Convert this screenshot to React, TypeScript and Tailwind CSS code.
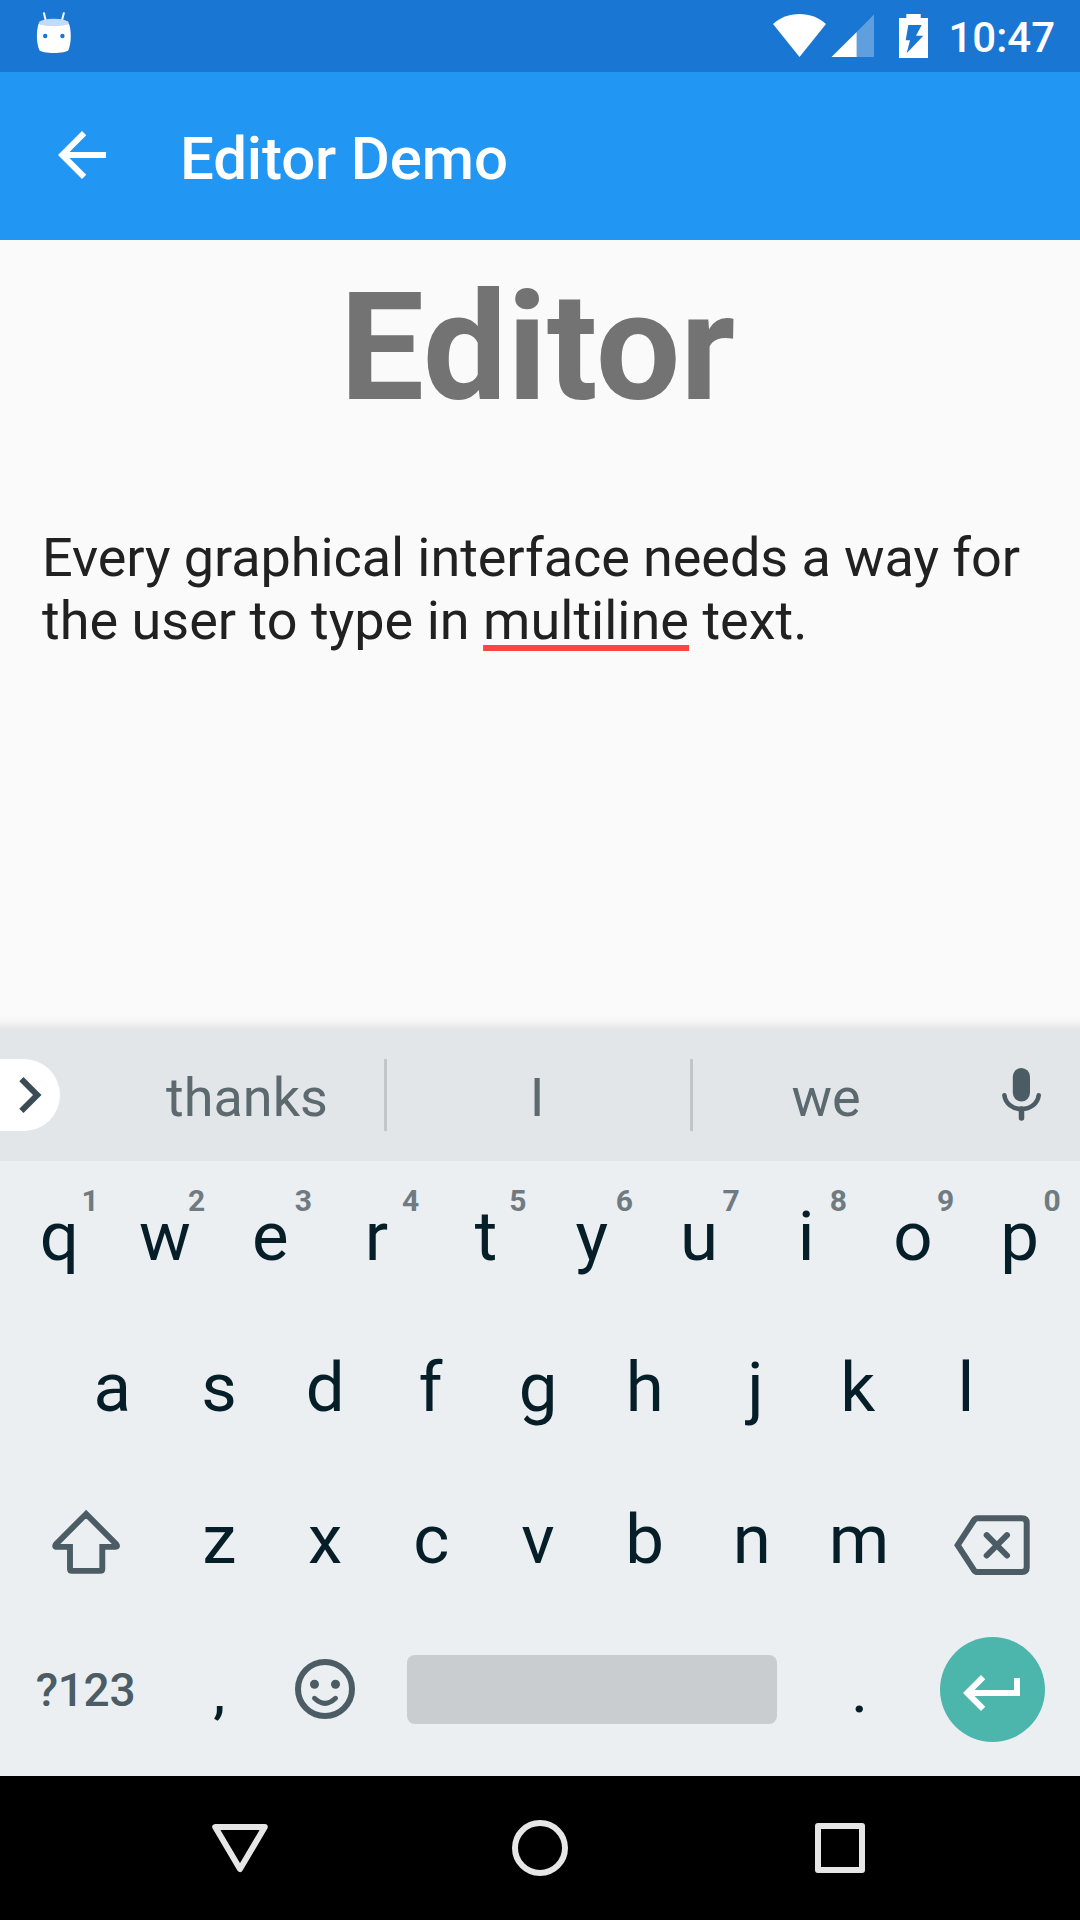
import React from "react";

const topRow = ["q", "w", "e", "r", "t", "y", "u", "i", "o", "p"];
const homeRow = ["a", "s", "d", "f", "g", "h", "j", "k", "l"];
const bottomRow = ["z", "x", "c", "v", "b", "n", "m"];

const nudge: Record<string, string> = {
  q: "translate-x-[1px]",
  e: "-translate-x-[1.5px]",
  r: "-translate-x-[2px]",
  t: "translate-x-[1px]",
  u: "translate-x-[0.5px]",
  i: "translate-x-[1px]",
  o: "translate-x-[1px]",
  p: "translate-x-[1px]",
  a: "translate-x-[1px]",
  s: "translate-x-[1px]",
  d: "translate-x-[0.5px]",
  f: "-translate-x-[1px]",
  j: "translate-x-[4px]",
  k: "-translate-x-[0.5px]",
  l: "translate-x-[1px]",
  z: "translate-x-[1px]",
  c: "-translate-x-[0.5px]",
  v: "-translate-x-[0.5px]",
  b: "-translate-x-[0.5px]",
  m: "translate-x-[0.5px]",
  "1": "-translate-x-[1px]",
  "2": "-translate-x-[1px]",
  "3": "-translate-x-[1px]",
  "4": "-translate-x-[0.5px]",
  "8": "translate-x-[0.5px]",
  "9": "translate-x-[1px]",
  "0": "translate-x-[1px]",
};

function Key({ label }: { label: string }) {
  return (
    <div className="flex h-full w-[106.7px] shrink-0 items-center justify-center">
      <span className={`text-[69px] leading-none ${nudge[label] ?? ""}`}>{label}</span>
    </div>
  );
}

function NumberedKey({ label, hint }: { label: string; hint: string }) {
  return (
    <div className="relative">
      <Key label={label} />
      <span
        className={`absolute top-[24px] left-[74px] w-6 text-center text-[30px] leading-8 font-bold text-[#6f7b81] ${nudge[hint] ?? ""}`}
      >
        {hint}
      </span>
    </div>
  );
}

function PunctuationKey({ label }: { label: string }) {
  return (
    <div className="flex w-[106.7px] shrink-0 items-center justify-center pt-[9px] pl-[2px]">
      <span className="text-[54px] leading-none font-medium">{label}</span>
    </div>
  );
}

function StatusBar() {
  return (
    <header className="flex h-[72px] items-start justify-between bg-[#1976d2] pr-[25px] pl-[36px] text-white">
      <svg className="mt-[12px] h-[42px] w-[36px]" viewBox="36 12 36 42">
        <path
          d="M44 13.2l2 8.6M63.8 13.2l-2.2 8.6"
          stroke="white"
          strokeWidth="2"
          strokeLinecap="round"
        />
        <ellipse cx="53.8" cy="23" rx="15" ry="4.2" fill="#c5daf4" />
        <path
          d="M38.7 23.5C42 27 65.5 27 68.9 23.5C71.5 30 71.5 43 68.5 50C66 54 41.5 54 39.3 50C36.2 43 36.2 30 38.7 23.5Z"
          fill="white"
        />
        <circle cx="45.2" cy="36" r="2.2" fill="#1976d2" />
        <circle cx="62.4" cy="36" r="2.2" fill="#1976d2" />
      </svg>
      <div className="flex items-start">
        <svg className="mt-[14px] h-[44px] w-[54px]" viewBox="773 14 54 44" fill="white">
          <path d="M799.5 57L773 24C780 17.5 789.5 14 799.5 14S819 17.5 826 24Z" />
        </svg>
        <svg className="mt-[14px] ml-[4px] h-[44px] w-[44px]" viewBox="831 14 44 44">
          <path d="M856.7 32V57H874V14.5Z" fill="#5f9fe0" />
          <path d="M831.5 57H856.7V32Z" fill="white" />
        </svg>
        <svg className="mt-[14px] ml-[24px] h-[44px] w-[30px]" viewBox="899 14 30 44" fill="white">
          <path
            fillRule="evenodd"
            d="M906.3 14H920.7V18H928V58H899V18H906.3ZM908.3 25L905.7 40.3H910L906.7 53.3L923.3 35.7H916L921.7 25Z"
          />
        </svg>
        <span className="mt-[13px] ml-[19px] text-[42px] leading-[50px] font-medium">10:47</span>
      </div>
    </header>
  );
}

function AppBar() {
  return (
    <div className="flex h-[168px] items-start bg-[#2196f3] pl-[46px] text-white">
      <svg className="mt-[47px] size-[72px]" viewBox="0 0 24 24" fill="white">
        <path d="M20 11H7.83l5.59-5.59L12 4l-8 8 8 8 1.41-1.41L7.83 13H20v-2z" />
      </svg>
      <h1 className="mt-[52px] ml-[62px] text-[60px] leading-[70px] font-medium tracking-[-0.15px]">
        Editor Demo
      </h1>
    </div>
  );
}

function SuggestionStrip() {
  return (
    <div className="flex h-[132px] items-center bg-[#e2e6e9] text-[54px] text-[#5c6a70]">
      <div className="-mt-px flex h-[72px] w-[60px] shrink-0 items-center justify-end rounded-r-full bg-white">
        <svg className="mr-[17px] h-[36px] w-[24px]" viewBox="8.5 6 8 12" fill="#3b4c54">
          <path d="M10 6L8.59 7.41 13.17 12l-4.58 4.59L10 18l6-6z" />
        </svg>
      </div>
      <div className="ml-[49px] w-[275px] pt-[5px] pl-px text-center">thanks</div>
      <div className="h-[72px] w-[3px] bg-[#c2c6c9]" />
      <div className="w-[303px] pt-[5px] pr-[3px] text-center">I</div>
      <div className="h-[72px] w-[3px] bg-[#c2c6c9]" />
      <div className="w-[266px] pt-[5px] text-center">we</div>
      <svg
        className="ml-[41px] h-[56px] w-[44px]"
        viewBox="1000 1067 44 56"
        fill="none"
        stroke="#4b5c64"
      >
        <rect x="1012.8" y="1068" width="17.2" height="33.4" rx="8.6" fill="#4b5c64" stroke="none" />
        <path
          d="M1004.4 1095.2C1005.5 1103.5 1012.5 1109 1021.5 1109S1037.6 1103.5 1038.7 1095.2"
          strokeWidth="4.6"
          strokeLinecap="round"
        />
        <path d="M1021.5 1109V1118" strokeWidth="5.5" strokeLinecap="round" />
      </svg>
    </div>
  );
}

function Keyboard() {
  return (
    <section className="h-[747px] bg-[#ebeff2] text-[#061e28]">
      <SuggestionStrip />
      <div className="flex h-[151px] pl-[5px]">
        {topRow.map((letter, i) => (
          <NumberedKey key={letter} label={letter} hint={String((i + 1) % 10)} />
        ))}
      </div>
      <div className="flex h-[151px] pl-[58px]">
        {homeRow.map((letter) => (
          <Key key={letter} label={letter} />
        ))}
      </div>
      <div className="flex h-[151px] pt-px pl-[5px]">
        <div className="flex w-[160px] items-center justify-center pl-[2px]">
          <svg
            className="mt-[5px] h-[68px] w-[70px]"
            viewBox="51 1507.5 70 68"
            fill="none"
            stroke="#4b5c64"
            strokeWidth="5.9"
          >
            <path d="M86.1 1513.5L56 1543.6Q54 1546.4 57 1546.4H70V1568.5Q70 1570.4 72 1570.4H100.3Q102.3 1570.4 102.3 1568.5V1546.4H115.3Q118.2 1546.4 116.2 1543.6Z" />
          </svg>
        </div>
        {bottomRow.map((letter) => (
          <Key key={letter} label={letter} />
        ))}
        <div className="flex w-[160px] items-center justify-center">
          <svg
            className="mt-[12px] h-[62px] w-[78px]"
            viewBox="953 1514 78 62"
            fill="none"
            stroke="#4b5c64"
            strokeWidth="6"
          >
            <path d="M957.7 1545.2L973.8 1520.5Q975.3 1518.3 977.5 1518.3H1022Q1026.7 1518.3 1026.7 1523V1567.3Q1026.7 1572 1022 1572H977.5Q975.3 1572 973.8 1569.9Z" />
            <path d="M986.7 1535.2l20.3 20.3m0-20.3l-20.3 20.3" strokeLinecap="round" />
          </svg>
        </div>
      </div>
      <div className="flex h-[151px] pl-[5px]">
        <div className="flex w-[160px] items-center justify-center pt-[2px] pl-px text-[46px] font-medium tracking-[-0.3px] text-[#4b5c64]">
          ?123
        </div>
        <PunctuationKey label="," />
        <div className="flex w-[106.7px] items-center justify-center pb-px">
          <svg className="size-[60px]" viewBox="0 0 60 60" fill="none" stroke="#4b5c64">
            <circle cx="30" cy="30" r="27" strokeWidth="6" />
            <circle cx="19.5" cy="25.3" r="4.5" fill="#4b5c64" stroke="none" />
            <circle cx="40.5" cy="25.3" r="4.5" fill="#4b5c64" stroke="none" />
            <path d="M19.5 39.3Q30 49.3 40.5 39.3" strokeWidth="5" strokeLinecap="round" />
          </svg>
        </div>
        <div className="flex w-[426.8px] items-center justify-center">
          <div className="h-[69px] w-[370px] rounded-lg bg-[#c9cdd0]" />
        </div>
        <PunctuationKey label="." />
        <div className="flex w-[160px] items-center justify-center pl-[2px]">
          <div className="flex size-[105px] items-center justify-center rounded-full bg-[#4db6ac] pt-[6px]">
            <svg className="size-[72px]" viewBox="0 0 24 24" fill="white">
              <path d="M19 7v4H5.83l3.58-3.59L8 6l-6 6 6 6 1.41-1.41L5.83 13H21V7z" />
            </svg>
          </div>
        </div>
      </div>
    </section>
  );
}

function NavigationBar() {
  return (
    <nav className="flex h-[144px] items-center justify-center gap-[240px] bg-black">
      <svg
        className="size-[60px]"
        viewBox="210 1818 60 60"
        fill="none"
        stroke="#e6e6e6"
        strokeWidth="6"
        strokeLinejoin="round"
      >
        <path d="M215.2 1827H264.8L240 1869Z" />
      </svg>
      <svg className="size-[60px]" viewBox="0 0 60 60" fill="none" stroke="#e6e6e6" strokeWidth="6">
        <circle cx="30" cy="30" r="25" />
      </svg>
      <svg
        className="size-[60px]"
        viewBox="0 0 60 60"
        fill="none"
        stroke="#e6e6e6"
        strokeWidth="6"
        strokeLinejoin="round"
      >
        <rect x="8" y="8" width="44" height="44" />
      </svg>
    </nav>
  );
}

export default function App() {
  return (
    <div className="flex h-[1920px] w-[1080px] flex-col overflow-hidden bg-[#fafafa] font-[Roboto,sans-serif]">
      <StatusBar />
      <AppBar />
      <main className="flex h-[789px] flex-col">
        <h2 className="pt-[20px] pr-[5px] text-center text-[150px] leading-[176px] font-bold text-[#737373]">
          Editor
        </h2>
        <p className="mt-[90px] pl-[42px] text-[54px] leading-[63px] text-[#212121]">
          <span className="tracking-[-0.07px]">Every graphical interface needs a way for</span>
          <br />
          <span className="tracking-[0.02px]">
            the user to type in{" "}
            <span className="underline decoration-[#ff4444] decoration-[6px] underline-offset-[6px] [text-decoration-skip-ink:none]">
              multiline
            </span>{" "}
            text.
          </span>
        </p>
        <div className="mt-auto h-[14px] bg-linear-to-b from-[#fafafa] via-[#f4f4f4] to-[#e5e6e6]" />
      </main>
      <Keyboard />
      <NavigationBar />
    </div>
  );
}
